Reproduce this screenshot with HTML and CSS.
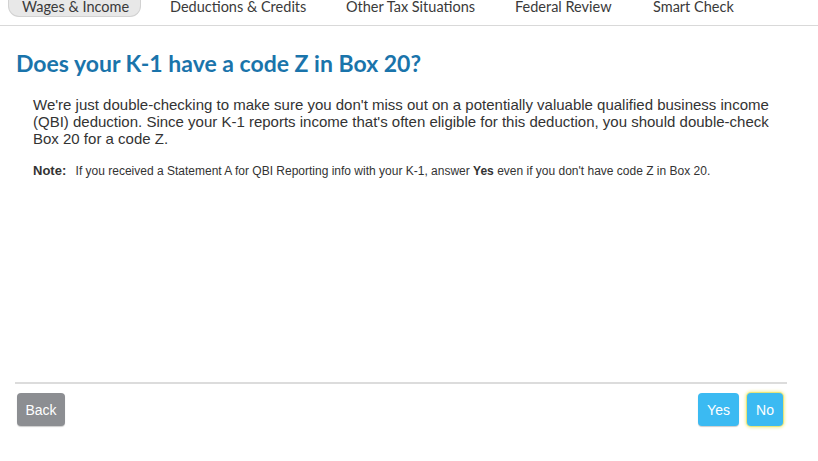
FILE: index.html
```html
<!DOCTYPE html>
<html>
<head>
<meta charset="utf-8">
<link rel="stylesheet" href="styles.css">
</head>
<body>
<nav class="tabs">
  <span class="tab active">Wages &amp; Income</span>
  <span class="tab">Deductions &amp; Credits</span>
  <span class="tab">Other Tax Situations</span>
  <span class="tab">Federal Review</span>
  <span class="tab">Smart Check</span>
</nav>
<main class="page">
  <h1 class="title">Does your K-1 have a code Z in Box 20?</h1>
  <p class="body-text">We're just double-checking to make sure you don't miss out on a potentially valuable qualified business income (QBI) deduction. Since your K-1 reports income that's often eligible for this deduction, you should double-check Box 20 for a code Z.</p>
  <p class="note"><b class="note-label">Note:</b> If you received a Statement A for QBI Reporting info with your K-1, answer <b>Yes</b> even if you don't have code Z in Box 20.</p>
</main>
<footer class="actions">
  <button class="btn btn-back">Back</button>
  <div class="right">
    <button class="btn btn-primary btn-yes">Yes</button>
    <button class="btn btn-primary focused">No</button>
  </div>
</footer>
</body>
</html>
```
FILE: styles.css
```css
html, body {
  margin: 0;
  padding: 0;
  background: #fff;
}
body {
  width: 818px;
  height: 461px;
  overflow: hidden;
  font-family: "Liberation Sans", Arial, sans-serif;
}
.tabs {
  display: flex;
  align-items: flex-start;
  box-sizing: border-box;
  height: 26px;
  border-bottom: 1px solid #d9d9d9;
  padding-left: 8px;
  font-family: Lato, "Open Sans", sans-serif;
  font-size: 14.5px;
  color: #3a3a3a;
}
.tab {
  white-space: nowrap;
  height: 17px;
  line-height: 13px;
  box-sizing: border-box;
  flex: none;
}
.tab.active {
  width: 133px;
  padding-left: 13px;
  background: #e8e8e8;
  border: 1px solid #d2d2d2;
  border-top: none;
  border-radius: 0 0 11px 11px;
}
.tab:nth-child(2) { margin-left: 29px; width: 176px; }
.tab:nth-child(3) { width: 169px; }
.tab:nth-child(4) { width: 138px; }
.page {
  box-sizing: border-box;
  height: 356px;
  padding-top: 24px;
}
.title {
  margin: 0 0 0 16px;
  font-family: Lato, sans-serif;
  font-weight: 700;
  font-size: 23px;
  color: #1a74ab;
  line-height: 26px;
}
.body-text {
  margin: 20px 0 0 33px;
  width: 758px;
  font-size: 15px;
  line-height: 17px;
  color: #333;
}
.note {
  margin: 17px 0 0 33px;
  font-size: 12px;
  line-height: 14px;
  color: #333;
}
.note-label {
  font-size: 13px;
  margin-right: 6px;
}
.actions {
  margin: 0 31px 0 15px;
  border-top: 2px solid #dcdcdc;
  padding: 9px 4px 0 2px;
  display: flex;
  justify-content: space-between;
}
.right {
  display: flex;
  gap: 8px;
}
.btn {
  height: 33px;
  border: none;
  border-radius: 4px;
  color: #fff;
  font-family: "Liberation Sans", Arial, sans-serif;
  font-size: 14px;
  padding: 0;
  box-shadow: 0 1px 1px rgba(0,0,0,0.2);
}
.btn-back {
  background: #8c8e92;
  width: 48px;
}
.btn-primary {
  background: #3bbaf2;
}
.btn-yes { width: 41px; }
.focused {
  width: 36px;
  box-shadow: 0 0 0 1px #e7e57a, 0 0 3px 2px #f4f1a8;
}
```
